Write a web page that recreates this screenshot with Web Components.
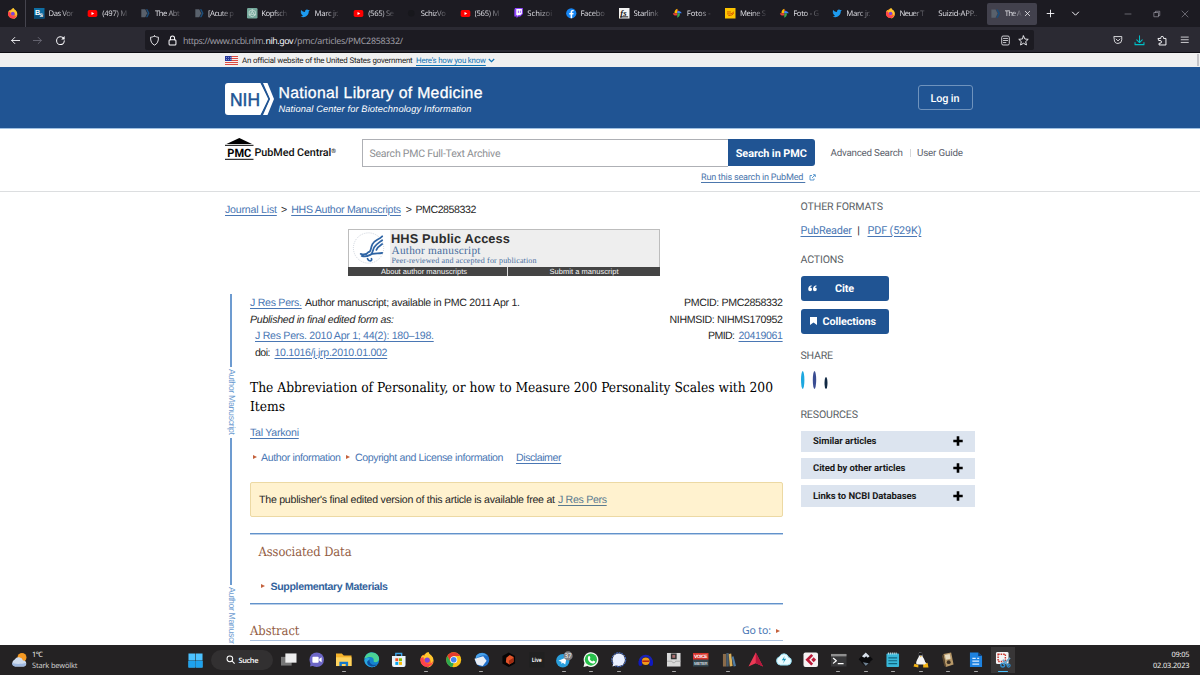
<!DOCTYPE html>
<html lang="de">
<head>
<meta charset="utf-8">
<title>The Abbreviation of Personality</title>
<style>
html,body{margin:0;height:100%;overflow:hidden;background:#fff;font-family:Roboto,"Liberation Sans",sans-serif;text-rendering:geometricPrecision}
</style>
</head>
<body>
<desk-top></desk-top>
<script>
/* Text run that spreads or tightens its letters to a given length; --dy nudges it down inside a centred row. */
class FitText extends HTMLElement{
  static all=[];
  constructor(){super();this.attachShadow({mode:'open'}).innerHTML=
    '<style>:host{display:inline-block;white-space:pre;flex:none;padding-top:var(--dy,0)}:host([u]) span{text-decoration:underline;text-decoration-thickness:1px;text-underline-offset:1.5px}</style><span><slot></slot></span>';}
  connectedCallback(){FitText.all.push(this);}
  fit(){
    const w=+this.getAttribute('w'),s=this.shadowRoot.querySelector('span'),r=s.getBoundingClientRect();
    const v=getComputedStyle(this).writingMode!=='horizontal-tb',n=this.textContent.length;
    if(!w||n<2)return;
    s.style.letterSpacing=((w-(v?r.height:r.width))/(n-1)).toFixed(3)+'px';
    this.style[v?'height':'width']=w+'px';
  }
}
customElements.define('fit-text',FitText);
const t=(s,w,st='',u='')=>`<fit-text w="${w}" style="${st}" ${u}>${s}</fit-text>`;

const fox='<circle cx="8" cy="8.6" r="6.6" fill="#ff7a1a"/><path d="M2 6C3 2 5 4 6 4C6 1 9 0 10 0c0 3 5 3 5 9 0 4-3 7-7 7 3-1 5-4 4-7-1-3-4-3-6-2z" fill="#ffc72e"/><path d="M1.500 7c0 5 3 8.600 7 8.300 3 0 6-2.600 6-6-1.500 3-4 3.500-6 2.600C5 11 4 8 5 5.500 3 5 2 6 1.500 7z" fill="#ff4150"/><circle cx="8.500" cy="8.300" r="2.700" fill="#8044d8"/>';
const yt='<rect x="1" y="3" width="14" height="10" rx="2.500" fill="#f00"/><path d="M6.500 5.700v4.600l4-2.300z" fill="#fff"/>';
const ncbi='<path d="M2 2h6l3 6-3 6H2z" fill="#59616c"/><path d="M9 2h2.500l3 6-3 6H9l3-6z" fill="#1c4e7b"/>';
const bird='<path d="M15 3.500l-1.600 1.600C13.500 11 9 14 5 14c-1.500 0-3-.5-4-1.100 1.500 0 3-.4 3.800-1.200-1.300-.2-2.300-1-2.600-2h1.200C2 9.200 1 8 1.200 6.600l1.200.3C1.200 6 .9 4.300 1.700 3c1.500 2 3.600 3 6 3.100C7.300 3.700 9 2.200 10.700 2.300c.9 0 1.500.4 2 .9z" fill="#1d9bf0"/>';
const photos='<path d="M8 8V1.500a3.700 3.700 0 010 6.500z" fill="#e94335"/><path d="M8 1.200V8H3.800C3.500 5 5 2 8 1.200z" fill="#fbbc04"/><path d="M14.800 8H8V5c3-1.500 6 0 6.800 3z" fill="#4285f4"/><path d="M8 14.800V8h4c.3 3-1 6-4 6.800z" fill="#34a853"/><path d="M1.200 8H8v3C5 12.500 2 11 1.200 8z" fill="#ea4335"/>';
const S=(d,c='#fbfbfe',w=1.300)=>`<path d="${d}" fill="none" stroke="${c}" stroke-width="${w}" stroke-linecap="round" stroke-linejoin="round"/>`;
const ICONS={
  none:'',fox,yt,ncbi,bird,photos,
  bs:'<rect width="16" height="16" fill="#0f6ea3"/><path d="M0 11h16v5H0z" fill="#0a4d78"/><text x="1.500" y="11" font-family="Liberation Sans" font-weight="700" font-size="11" fill="#fff">B</text><text x="8.500" y="14" font-family="Liberation Sans" font-weight="700" font-size="10" fill="#fff">s</text>',
  gpt:'<rect width="16" height="16" rx="2" fill="#75a99c"/><g fill="none" stroke="#dfece8" stroke-width="1"><circle cx="8" cy="8" r="2"/><path d="M8 2.500l4.700 2.700v5.500L8 13.500l-4.700-2.800V5.200z"/><path d="M8 2.500v4M12.700 10.700L9.500 9M3.300 10.700L6.500 9"/></g>',
  dark:'<circle cx="8" cy="8" r="5" fill="#17171c"/>',
  twitch:'<path d="M3 0h12v9l-4 4H8l-2.500 2.500V13H2V3z" fill="#9146ff"/><path d="M5 1.500h8.500v6.800L11 10.500H8.500L6.500 12v-1.500H5z" fill="#fff"/><path d="M8.200 4v3.500M11.200 4v3.500" stroke="#9146ff" stroke-width="1.300"/>',
  fb:'<circle cx="8" cy="8" r="7.800" fill="#1685f2"/><path d="M7 15.800V10H5V7.700h2V6c0-2 1.200-3.100 3-3.100l1.700.2v2h-1c-1 0-1.300.6-1.300 1.200v1.400h2.200L11.200 10H9.400v5.800z" fill="#fff"/>',
  fs:'<rect width="16" height="16" fill="#f4f4f4"/><text x="2" y="11.500" font-family="Liberation Serif" font-weight="700" font-style="italic" font-size="13" fill="#111">fs</text><path d="M2 13.500h12" stroke="#111" stroke-width="1.500"/>',
  ard:'<rect width="16" height="16" fill="#fcc400"/><path d="M3 6h6M3 9h4c2 0 6-1 6-3.500M5 11.500c4 0 8-1 8-4.500" stroke="#d35a00" stroke-width="1.500" fill="none"/>',
  back:S('M14 8H2.500M7 3.500L2.500 8 7 12.500'),
  fwd:S('M2 8h11.500M9 3.500L13.500 8 9 12.500','#6c6b77'),
  reload:S('M13.500 8.500A5.600 5.600 0 118 2.700c2 0 3.600.9 4.700 2.300','#fbfbfe',1.500)+'<path d="M14 1.500v5H9z" fill="#fbfbfe"/>',
  shield:S('M8 1.500c2 1.200 3.500 1.600 5.700 1.700C14 9 12 13 8 14.700 4 13 2 9 2.300 3.200 4.500 3.100 6 2.700 8 1.500z'),
  lock:'<rect x="3" y="7" width="10" height="7.500" rx="1.500" fill="none" stroke="#fbfbfe" stroke-width="1.500"/>'+S('M5 7V4.500a3 3 0 016 0V7','#fbfbfe',1.500),
  reader:'<rect x="2.500" y="1.500" width="11" height="13" rx="2" fill="none" stroke="#d6d6dc" stroke-width="1.400"/>'+S('M5 5h6M5 8h6M5 11h3.500','#d6d6dc'),
  star:S('M8 1.300l2 4.500 4.900.5-3.700 3.300 1.100 4.900L8 12l-4.300 2.500 1.100-4.900L1.100 6.300 6 5.800z'),
  pocket:S('M2 2.500h12v5a6 6 0 01-12 0zM5 6.500l3 3 3-3'),
  down:S('M8 1v9.500M4 7l4 4 4-4M1.500 11v3h13v-3','#00bfc8',1.500),
  puzzle:S('M2 5h3.500V4a2 2 0 014 0v1H13v9.500H3V12h1.500a2 2 0 000-4H3z','#fbfbfe',1.400),
  menu:S('M2 3.500h12M2 8h12M2 12.500h12'),
  plus:S('M8 2v12M2 8h12','#fbfbfe',1.600),
  chev:S('M2.500 5.500L8 11l5.500-5.500','#fbfbfe',1.700),
  x:S('M3 3l10 10M13 3L3 13','#fbfbfe',1.700),
  xw:S('M2 2l12 12M14 2L2 14','#8f8e98',1.300),
  min:S('M2 8h12','#8f8e98',1.300),
  restore:S('M2.500 5h8.500v8.500H2.500zM5 5V2.500h8.500V11H11','#9f9ea8',1.300),
  weather:'<circle cx="11" cy="5.500" r="4.500" fill="#f59a23"/><path d="M4 14.500a3.700 3.700 0 01-.3-7A4.500 4.500 0 0112 8.500a3 3 0 01.5 6z" fill="#cfdcee"/><path d="M4 14.500a3.700 3.700 0 01-3-4c2 2 10 1.500 13.800.5a3 3 0 01-2.300 3.500z" fill="#9fb9e0"/>',
  win:'<path d="M.5.500h7.200v7.200H.5zM8.300.500h7.200v7.200H8.300zM.5 8.300h7.200v7.200H.5zM8.300 8.300h7.200v7.200H8.300z" fill="#4cc2ff"/><path d="M.5 8.300h7.200v7.200H.5zM8.300 8.300h7.200v7.200H8.300z" fill="#1ea2ee"/>',
  search:'<circle cx="6.500" cy="6.500" r="4.800" fill="none" stroke="#fff" stroke-width="1.700"/><path d="M10 10l4.500 4.500" stroke="#fff" stroke-width="1.800"/>',
  tv:'<rect x="0" y="5" width="11" height="9" fill="#777"/><rect x="4.500" y="1.500" width="11.500" height="9.500" fill="#eee"/>',
  chat:'<circle cx="8" cy="8" r="7.500" fill="#6c66c6"/><path d="M1 15l1-5 4 4z" fill="#6c66c6"/><rect x="3.500" y="5" width="6.500" height="6" rx="1" fill="#fff"/><path d="M10.500 7.300L13 5.500v5l-2.500-1.800z" fill="#fff"/>',
  folder:'<path d="M0 1.500h6l2 2h8v11H0z" fill="#f6b32b"/><path d="M0 5.500h16v9H0z" fill="#ffd45e"/><path d="M3.500 10h9v4.500h-2.500v-2H6v2H3.500z" fill="#1677c9"/>',
  edge:'<circle cx="8" cy="8" r="7.700" fill="#1483cf"/><path d="M.5 7C1 3 4 .4 8 .4c4.500 0 7.600 3 7.600 6.600 0 2-1.600 3.500-4 3.500-1.600 0-2-1-1.600-2C10.500 6 7 3.500.5 7z" fill="#4ad295"/><path d="M6 7c-1 4 1.500 7 7.500 6.300A7.700 7.700 0 01.4 8.500C2 5.500 5 5.500 6 7z" fill="#2aa7df"/><path d="M6 7.500c-1 4 2 6.500 7.700 5.600C9 17 2 14 3.500 9.500z" fill="#0c4fa0"/>',
  store:'<path d="M1 4h14v9.500a2 2 0 01-2 2H3a2 2 0 01-2-2z" fill="#e9f3fa"/><path d="M5 4V1.500h6V4" fill="none" stroke="#3ba4e8" stroke-width="1.400"/><path d="M4.500 6.500h3v3h-3z" fill="#f25022"/><path d="M8.300 6.500h3v3h-3z" fill="#7fba00"/><path d="M4.500 10.300h3v3h-3z" fill="#00a4ef"/><path d="M8.300 10.300h3v3h-3z" fill="#ffb900"/>',
  chrome:'<circle cx="8" cy="8" r="7.700" fill="#fbc116"/><path d="M1.300 4.200A7.700 7.700 0 0114.700 4.200H8L4.700 9.900z" fill="#e33b2e"/><path d="M1.300 4.200L4.700 10 8 11.900l-1.500 3.700A7.700 7.700 0 011.300 4.200z" fill="#2da94f"/><circle cx="8" cy="8" r="3.700" fill="#fff"/><circle cx="8" cy="8" r="2.900" fill="#4285f4"/>',
  tb:'<circle cx="8.500" cy="8" r="7.300" fill="#1f6fc9"/><path d="M.5 7l9-2.500L13 9l-4 5.500L3 13z" fill="#e8eef6"/><path d="M2 4c3-4 9-4 12 0-4-1.500-8-.5-12 3z" fill="#4aa3ea"/>',
  hex:'<path d="M8 .5l6.500 3.700v7.600L8 15.500l-6.500-3.700V4.200z" fill="#050505"/><path d="M9 3l4 2.200-.2 5L8.500 13 5 10.500 5.500 6z" fill="#e2542a"/><path d="M8 9l5-3v4.200L8.500 13z" fill="#a32d12"/>',
  live:'<rect width="16" height="16" fill="#202020"/><text x="8" y="10.300" text-anchor="middle" font-family="Open Sans" font-weight="700" font-size="6" textLength="10.500" lengthAdjust="spacingAndGlyphs" fill="#f4f4f4">Live</text>',
  tg:'<circle cx="7" cy="9" r="6.900" fill="#2a9fdc"/><path d="M2.500 9l8.500-3.500L9.500 13 7 11l-1.300 1.300L5.500 10z" fill="#fff"/><circle cx="12.500" cy="4" r="4.700" fill="#807f82"/><text x="12.500" y="6.400" text-anchor="middle" font-family="Open Sans" font-size="6.500" fill="#fff">37</text>',
  wa:'<path d="M.5 15.500l1-4.200A7.600 7.600 0 114.600 14.500z" fill="#f2f7f2"/><circle cx="8.200" cy="7.800" r="6.300" fill="#28c04b"/><path d="M5.500 4.300l1.300-.1.900 2-.8 1c.6 1.200 1.500 2 2.700 2.500l1-1 2 1c0 2-2 2.500-3.500 2C6.500 10.700 4 7.500 5.500 4.300z" fill="#fff"/>',
  sig:'<circle cx="8" cy="8" r="7.200" fill="none" stroke="#4a7df0" stroke-width="1" stroke-dasharray="2 .8"/><circle cx="8" cy="8" r="6.400" fill="#eaf0ff"/><path d="M1.500 15l1.300-5 3.500 3.500z" fill="#eaf0ff"/>',
  aud:'<path d="M2 10a6 6 0 0112 0" fill="none" stroke="#1a22b8" stroke-width="2.500"/><rect x=".5" y="8" width="4" height="6.500" rx="2" fill="#1019c0"/><rect x="11.500" y="8" width="4" height="6.500" rx="2" fill="#1019c0"/><ellipse cx="8" cy="9.500" rx="4" ry="3.800" fill="#f09b1a"/><path d="M4.500 9.500h7" stroke="#b21d12" stroke-width="1.500"/>',
  box:'<rect x="1" y="1" width="14" height="14" fill="#d9d9d9"/><rect x="5" y="1.500" width="6" height="6" fill="#333"/><path d="M6.500 3h3v3h-3z" fill="#a96f6f"/><path d="M1 9.500h5l1 1.500h2l1-1.500h5" stroke="#aaa" fill="none"/>',
  voice:'<rect x="0" y="1" width="16" height="7" fill="#d8332b"/><rect y="8" width="16" height="7" fill="#334650"/><text x="8" y="6.500" text-anchor="middle" font-family="Liberation Sans" font-weight="700" font-size="5" textLength="14" fill="#fff">VOICE</text><text x="8" y="13.500" text-anchor="middle" font-family="Liberation Sans" font-weight="700" font-size="4.500" textLength="14" fill="#c9d2d6">METER</text>',
  books:'<path d="M2 2h3.500v13H2z" fill="#8a6b4a"/><path d="M5.500 1H8v14H5.500z" fill="#4a5f70"/><path d="M8 2l2.500-.5 1.500 13L9 15z" fill="#d9b05a"/><path d="M11 5l2-.5 2.500 10-2.500.5z" fill="#4f7ba3"/>',
  tri:'<path d="M8 .5L15.500 15 8 11.500.5 15z" fill="#ec3a55"/><path d="M8 .5L15.500 15 8 11.500z" fill="#b5163c"/>',
  cloud:'<path d="M4.500 13.500A4.500 4.500 0 013.600 4.800a5 5 0 019.300.5A4.200 4.200 0 0112 13.500z" fill="#e9fbff" stroke="#8cd9ee"/><path d="M9 4L6 8.500h2.500L7 12l3.500-5H8z" fill="#1593b8"/>',
  cub:'<rect x=".5" y=".5" width="15" height="15" rx="2" fill="#f5f2f3"/><path d="M9.500 3L4.500 8l5 5" fill="none" stroke="#bb1a38" stroke-width="2.800"/><path d="M11 5.500L13.500 8 11 10.500 8.500 8z" fill="#bb1a38"/>',
  term:'<rect x="0" y="2" width="16" height="13" fill="#38383a"/><path d="M0 2h16v2.500H0z" fill="#8f8f8f"/>'+S('M2.500 6.500l3 2.500-3 2.500M7.500 12h5','#fff',1.300),
  ink:'<path d="M8 .5l7 6.500c1 1.500-2.500 2-2.500 3.500L8 15l-4.500-4C3.500 9 0 8.500 1 7z" fill="#0b0b0d"/><path d="M8 .5l4 4-2 1.500-1.500-1.500L6.500 6 4 4.500z" fill="#d8e0ea"/><path d="M5 10.500l6 1-3 3z" fill="#6e8091"/>',
  notes:'<rect x="1.500" y="1.500" width="13" height="14" rx="1" fill="#38b7d8"/><path d="M3 1.500h10" stroke="#cfe9f1" stroke-width="2" stroke-dasharray="1 1"/><path d="M3.500 6h9M3.500 9h9M3.500 12h9" stroke="#11667f" stroke-width="1.200"/>',
  tux:'<path d="M6 1c3-1.500 4 1 4 4 2 3 3 5 2.500 8H4C2 11 5 7 6 5z" fill="#f3f3f3"/><path d="M6 1c2-1.500 4 0 4 2.500H5.500z" fill="#16161a"/><path d="M1.500 12l4 1.500V16l-5-1zM15 11l-4.500 1.500V16H16z" fill="#f3b313"/><path d="M10.500 8.500l3.500 3-3 2z" fill="#efefef"/><path d="M7 4h2l-1 1.500z" fill="#f3b313"/>',
  mix:'<path d="M3.500 2l8-1.500L14 13l-8 2.500z" fill="#b69868"/><path d="M5 3l5-1 1 5-5 1z" fill="#e7dcc1"/><circle cx="9" cy="10.500" r="2" fill="#3b2f22"/><path d="M3.500 2L6 15.500l-1.500-1L2 4z" fill="#5d4a30"/>',
  doc:'<path d="M2 .5h8.500L14.500 4v11.500H2z" fill="#1d82e0"/><path d="M10.500.5L14.500 4h-4z" fill="#0e3f79"/><path d="M4.500 6.500h3.500M4.500 9.500h7M4.500 12.500h7M9.500 6.500h2" stroke="#d9ecff" stroke-width="1.300"/>',
  snip:'<rect x="1" y="0" width="13" height="12.500" rx="1.500" fill="#f2f4f6"/><rect x="3.200" y="2.300" width="7.500" height="7.500" fill="none" stroke="#c8352c" stroke-width="1.500" stroke-dasharray="1.600 1"/><path d="M15.500 6l-7 7M8 8l6 6" stroke="#6aa3c6" stroke-width="1.800"/><circle cx="8" cy="13.500" r="2" fill="none" stroke="#2f8fcf" stroke-width="1.400"/><circle cx="14" cy="14" r="1.600" fill="none" stroke="#2f8fcf" stroke-width="1.200"/>'
};
class UiIcon extends HTMLElement{
  constructor(){super();this.attachShadow({mode:'open'});}
  connectedCallback(){
    const s=this.getAttribute('size')||11;
    this.shadowRoot.innerHTML=`<style>:host{display:block;flex:none;width:${s}px;height:${s}px}svg{display:block;overflow:visible}</style><svg width="${s}" height="${s}" viewBox="0 0 16 16">${ICONS[this.getAttribute('name')]}</svg>`;
  }
}
customElements.define('ui-icon',UiIcon);
const ic=(n,s=11,st='')=>`<ui-icon name="${n}" size="${s}" style="${st}"></ui-icon>`;
const def=(name,html)=>customElements.define(name,class extends HTMLElement{
  constructor(){super();this.attachShadow({mode:'open'}).innerHTML=html;}
});

/* ---------- browser chrome ---------- */
const tabs=[['bs','Das Vor',25],['yt','(497) M',25],['ncbi','The Abt',25],['ncbi','[Acute p',26],['gpt','Kopfsch',26],['bird','Marc jr.',24],['yt','(565) Se',26],['dark','SchizVo',25],['yt','(565) M',25],['twitch','Schizoi',25],['fb','Facebo',24.500],['fs','Starlink',25],['photos','Fotos -',24],['ard','Meine S',26],['photos','Foto - G',26],['bird','Marc jr.',24],['fox','Neuer T',25]];
def('browser-tabs',`<style>
:host{display:flex;align-items:center;height:27px;background:#1c1b22;color:#dcdce2;font:7.700px "Noto Sans","Open Sans",sans-serif;--dy:1px}
.pin{width:26px;height:27px;box-sizing:border-box;border-right:1px solid #45444e;display:flex;align-items:center;padding-left:7px}
.tab{width:53.200px;box-sizing:border-box;padding-left:7.500px;display:flex;align-items:center;gap:4px;flex:none;height:27px}
.l{width:28px;white-space:nowrap;flex:none;-webkit-mask:linear-gradient(90deg,#000 40%,transparent 100%);mask:linear-gradient(90deg,#000 40%,transparent 100%)}
.act{width:50px;height:22px;border-radius:2px;background:#42414d;display:flex;align-items:center;box-sizing:border-box;padding-left:3px;flex:none}
.sui{width:42px;-webkit-mask:linear-gradient(90deg,#000 65%,transparent);mask:linear-gradient(90deg,#000 65%,transparent)}
</style><div class="pin">${ic('fox',11)}</div><div style="width:.5px"></div>`
+tabs.map(([i,s,w])=>`<div class="tab">${ic(i,i==='yt'?11:10.500)}<div class="l">${t(s,w)}</div></div>`).join('')
+`<div class="l sui" style="margin-left:7.500px;margin-right:6.500px">${t('Suizid-APP..',39)}</div>
<div class="act">${ic('ncbi',11)}<div class="l" style="width:18px;margin-left:4px">${t('The A',17)}</div>${ic('x',7,'margin-left:1px')}</div>
${ic('plus',9,'margin-left:9.500px')}${ic('chev',9,'margin-left:16px')}${ic('min',8,'margin-left:44px')}${ic('restore',8,'margin-left:20.500px')}${ic('xw',8,'margin-left:20.500px')}`);
def('browser-nav',`<style>
:host{display:flex;align-items:center;height:26px;box-sizing:border-box;background:#2b2a33;border-bottom:1px solid #0e0d13;padding:1px 10px 0 9.500px;font:8.900px "Noto Sans",sans-serif;color:#9c9ba4;--dy:1px}
.bar{margin-left:79px;width:889px;height:20px;background:#1c1b22;border-radius:2px;display:flex;align-items:center;box-sizing:border-box;padding-left:4.500px;flex:none}
</style>${ic('back')}${ic('fwd',11,'margin-left:11.500px')}${ic('reload',11,'margin-left:11.500px')}
<div class="bar">${ic('shield')}${ic('lock',11,'margin-left:6.500px')}${t('https://www.ncbi.nlm.',82.500,'margin-left:5.500px')}${t('nih.gov',28,'color:#f4f4f8;margin-right:.5px')}${t('/pmc/articles/PMC2858332/',109)}
${ic('reader',11,'margin-left:597px')}${ic('star',11,'margin-left:6.500px')}</div>
${ic('pocket',10,'margin-left:79px')}${ic('down',11,'margin-left:11.500px')}${ic('puzzle',11,'margin-left:12px')}${ic('menu',9.500,'margin-left:12px')}`);

/* ---------- site header ---------- */
def('gov-banner',`<style>:host{display:flex;align-items:center;height:14px;background:#f0f0f0;padding-left:225px;font:7.900px Roboto,sans-serif;color:#1b1b1b}
.sb{width:2px;height:12px;background:#c4c4c8;margin-left:auto;margin-right:1px}svg{display:block}</style>
<svg width="13" height="9" viewBox="0 0 13 9"><rect width="13" height="9" fill="#f6f0f0"/><path d="M0 .5h13M0 2.500h13M0 4.500h13M0 6.500h13M0 8.500h13" stroke="#dd4b40"/><rect width="6.500" height="5" fill="#27389a"/><path d="M1 1.500h5M1 3.500h5" stroke="#aab4e6" stroke-width=".7" stroke-dasharray="1 1"/></svg>
${t('An official website of the United States government',170,'margin-left:4px')}${t("Here's how you know",70,'margin-left:4px;color:#0e74b5','u')}
<svg width="7" height="5" viewBox="0 0 7 5" style="margin-left:1.500px"><path d="M.8 1l2.700 2.700L6.200 1" fill="none" stroke="#0e74b5" stroke-width="1.200"/></svg><div class="sb"></div>`);
def('nih-header',`<style>:host{display:flex;align-items:center;height:62px;background:#205493;border-bottom:1px solid #9fc0e2;box-sizing:border-box;padding-left:225px;color:#fff;font-family:"Liberation Sans",sans-serif}
svg{display:block;margin-top:3px}.n{margin-left:4.500px;width:640px;padding-top:4px}.a,.b{display:flex;align-items:center}.a{height:18px;font-size:15.800px;-webkit-text-stroke:.3px #fff}.b{height:11px;font:italic 9.300px "Liberation Sans"}
.log{width:55px;height:25px;border:1px solid #6f93bd;border-radius:3px;box-sizing:border-box;display:flex;align-items:center;justify-content:center;font:500 10.800px Roboto;--dy:1px}</style>
<svg width="49" height="32" viewBox="0 0 49 32"><path d="M3 0h32.500l8.500 16-8.500 16H3a3 3 0 01-3-3V3a3 3 0 013-3z" fill="#fff"/><path d="M38 0h4.500L49 16l-6.500 16H38l7-16z" fill="#fff"/><path d="M36.300-.5L44 16l-7.700 16.500" fill="none" stroke="#205493" stroke-width="1.500"/><text x="5" y="22.500" font-family="Liberation Sans" font-size="18.500" textLength="30" lengthAdjust="spacingAndGlyphs" fill="#205493" stroke="#205493" stroke-width=".5">NIH</text></svg>
<div class="n"><div class="a">${t('National Library of Medicine',204)}</div><div class="b">${t('National Center for Biotechnology Information',193)}</div></div>
<div class="log" style="margin-left:-1px">${t('Log in',29)}</div>`);
def('search-area',`<style>:host{display:block;height:63px;box-sizing:border-box;border-bottom:1px solid #dcdee0;padding:9px 0 0 225px;font-family:Roboto,sans-serif;color:#5b616b}
.r{display:flex;align-items:center;height:29px}.in{width:366px;height:28px;box-sizing:border-box;border:1.500px solid #aeb0b5;border-right:0;display:flex;align-items:center;padding-left:7px;margin-left:25.500px;font-size:10.500px;color:#8d8f93;--dy:1.500px}
.go{width:87.500px;height:27px;background:#205493;border-radius:0 3px 3px 0;color:#fff;font-weight:700;font-size:10.900px;display:flex;align-items:center;justify-content:center;--dy:1px}
.d{width:1px;height:8px;background:#d6d7d9;margin:0 6.500px}svg{display:block}.logo{display:block;width:28.500px;height:22px;margin-top:-7px}</style>
<div class="r"><svg class="logo" viewBox="0 0 28.500 22"><path d="M14.300 0L27 6H1.500z"/><path d="M0 7.300h28.500M0 21.300h28.500" stroke="#000" stroke-width="1"/><text x="2.300" y="18.600" font-family="Roboto" font-weight="700" font-size="11.500" textLength="24" lengthAdjust="spacingAndGlyphs">PMC</text></svg>
${t('PubMed Central<sup style="font-size:6px;vertical-align:3.500px;line-height:0">®</sup>',81.500,'margin-left:1px;font-size:10.800px;font-weight:500;color:#111')}
<div class="in">${t('Search PMC Full-Text Archive',131)}</div><div class="go">${t('Search in PMC',71)}</div>
${t('Advanced Search',72.500,'margin-left:15.500px;font-size:9.800px;--dy:1.500px')}<div class="d"></div>${t('User Guide',46,'font-size:9.800px;--dy:1.500px')}</div>
<div class="r" style="height:20px;padding-left:476px;font-size:9.100px;color:#4c77ad;--dy:1.500px">${t('Run this search in PubMed ',104.500,'','u')}<svg width="7" height="7" viewBox="0 0 7 7" style="margin-left:3.500px"><path d="M3 1.500H1v4.500h4V4.500M3 4L6 1M4 .7h2.300V3" fill="none" stroke="#4c8fca" stroke-width=".9"/></svg></div>`);

/* ---------- article ---------- */
def('red-arrow',`<style>:host{display:block;flex:none;width:4px;height:4px}svg{display:block}</style><svg width="4" height="4" viewBox="0 0 4 4"><path d="M0 0l4 2-4 2z" fill="#c4623d"/></svg>`);
def('hhs-banner',`<style>:host{display:flex;flex-direction:column;width:312px;height:46px;box-sizing:border-box;border:1px solid #bdbdbd;border-bottom:0;background:#eee}
.top{height:36.500px;display:flex}.l{width:41px;background:#fff}.x{padding-left:1px}.x div{display:flex;align-items:center}
.bot{height:9px;background:#444;color:#f4f4f4;font:7.500px "Liberation Sans";display:flex;margin:0 -1px}.bot div{display:flex;align-items:center;box-sizing:border-box;height:9px}</style>
<div class="top"><div class="l"><svg width="41" height="36" viewBox="0 0 42 36"><circle cx="20" cy="18" r="15.500" fill="none" stroke="#bcc4cf" stroke-dasharray="1 1.200" stroke-width=".8"/><g fill="none" stroke="#2e64a4" stroke-width="1.800" stroke-linecap="round"><path d="M34 6c-4 4-8 4-10 8s-1 6-3 8M34 10c-4 3-6 4-8 7s-1 6-4 8M34 14c-3 2-5 3-6 6M20 22c-2 3-5 3-8 2M13 26c5 2 8-1 11-2s7 0 10-1M19 29c1 3 5 3 4 0"/></g></svg></div>
<div class="x"><div style="height:16px;font:700 12.800px 'Liberation Sans';color:#2d2d2d">${t('HHS Public Access',119)}</div><div style="height:10px;font:11.300px 'Liberation Serif';color:#4a6f9f">${t('Author manuscript',89,'margin-left:.5px')}</div><div style="height:9px;font:8px 'Liberation Serif';color:#4a6f9f">${t('Peer-reviewed and accepted for publication',145,'margin-left:.5px')}</div></div></div>
<div class="bot"><div style="width:160px;border-right:1px solid #ddd;padding-left:33px">${t('About author manuscripts',86)}</div><div style="padding-left:41.500px">${t('Submit a manuscript',69)}</div></div>`);
def('side-rail',`<style>:host{display:flex;flex-direction:column;align-items:center;width:11px;height:351px;font:8.800px "Liberation Sans",sans-serif;color:#6d9bd0}
i{display:block;width:2px;background:#6d9bd0;flex:none}fit-text{writing-mode:vertical-rl;margin:2px 0 2px 2px}</style>
<i style="height:73px"></i>${t('Author Manuscript',66)}<i style="height:147px;margin-top:1px"></i>${t('Author Manuscr',57)}`);
const B='#4a77b4';
def('article-body',`<style>:host{display:block;width:558px;font:10.600px "Liberation Sans",sans-serif;color:#262626}
.r{display:flex;align-items:center}.n{--dy:1px}.cols{display:flex;margin-top:19px}.m{width:533px;margin-left:14px}
.s{font-family:"DejaVu Serif Condensed","DejaVu Serif",serif}.box{margin-top:16px;height:35px;box-sizing:border-box;border:1px solid #ecd9a4;border-radius:2px;background:#fff2cf;padding-left:8px}
.sec{margin-top:16px;border:solid #6292cb;border-width:1px 0;box-shadow:0 1px #b9cfe9,inset 0 1px #b9cfe9;height:71px;box-sizing:border-box;padding-top:9px}</style>
<div class="r n" style="height:18px;padding-top:8px">${t('Journal List',52,'color:'+B,'u')}${t('&gt;',6,'margin-left:4px')}${t('HHS Author Manuscripts',110,'margin-left:4px;color:'+B,'u')}${t('&gt;',6,'margin-left:4.500px')}${t('PMC2858332',61,'margin-left:3.500px')}</div>
<hhs-banner style="margin:11px 0 0 123px"></hhs-banner>
<div class="cols"><side-rail></side-rail><div class="m">
<div class="r" style="height:17px">${t('J Res Pers.',52,'color:'+B,'u')}${t('Author manuscript; available in PMC 2011 Apr 1.',215,'margin-left:3px')}${t('PMCID: PMC2858332',99,'margin-left:auto')}</div>
<div class="r" style="height:17px">${t('Published in final edited form as:',144,'font-style:italic')}${t('NIHMSID: NIHMS170952',113.500,'margin-left:auto')}</div>
<div class="r" style="height:16px">${t('J Res Pers. 2010 Apr 1; 44(2): 180–198.',179,'margin-left:5px;color:'+B,'u')}${t('PMID:',27,'margin-left:auto')}${t('20419061',44.500,'margin-left:3.500px;color:'+B,'u')}</div>
<div class="r" style="height:17px">${t('doi:',15.500,'margin-left:5px')}${t('10.1016/j.jrp.2010.01.002',113,'margin-left:4px;color:'+B,'u')}</div>
<div class="s" style="margin-top:17px;font-size:13.700px;color:#000;--dy:1px"><div class="r" style="height:19px">${t('The Abbreviation of Personality, or how to Measure 200 Personality Scales with 200',523)}</div><div class="r" style="height:19px">${t('Items',35)}</div></div>
<div class="r n" style="height:18px;margin-top:7px;color:${B}">${t('Tal Yarkoni',49,'','u')}</div>
<div class="r n" style="height:18px;margin-top:7px;color:${B}"><red-arrow style="margin-left:2.500px"></red-arrow>${t('Author information',80,'margin-left:4.500px')}<red-arrow style="margin-left:5px"></red-arrow>${t('Copyright and License information',148.500,'margin-left:5px')}${t('Disclaimer',45.500,'margin-left:12.500px','u')}</div>
<div class="r box">${t("The publisher's final edited version of this article is available free at",296)}${t('J Res Pers',49,'margin-left:3px;color:#5a7a8f','u')}</div>
<div class="sec"><div class="r s n" style="height:18px;padding-left:8.500px;font-size:12.800px;color:#935d44">${t('Associated Data',93)}</div>
<div class="r n" style="height:18px;margin-top:16px;padding-left:11px;font-weight:700;color:#33639c"><red-arrow></red-arrow>${t('Supplementary Materials',117.500,'margin-left:5.500px')}</div></div>
<div class="r n" style="height:37px;box-sizing:border-box;padding-top:18px;border-bottom:1px solid #a9c0de"><span class="s" style="font-size:12.800px;color:#935d44">${t('Abstract',49.500)}</span>${t('Go to:',29,"margin-left:auto;--dy:0px;font:10.500px 'Noto Sans';color:"+B)}<red-arrow style="margin:0 3px 0 5px"></red-arrow></div>
</div></div>`);

/* ---------- right column ---------- */
const acc=(s,w,m)=>`<div class="acc" style="margin-top:${m}px">${t(s,w)}<svg width="10" height="10" viewBox="0 0 10 10"><path d="M5 .3v9.400M.3 5h9.400" stroke="#000" stroke-width="2.600"/></svg></div>`;
def('side-column',`<style>:host{display:block;width:174px;margin-left:17.500px;font:10.600px Roboto,sans-serif;color:#5b5f66}
.h{height:16px;display:flex;align-items:center}.btn{width:88px;height:24.500px;border-radius:3px;background:#205493;color:#fff;display:flex;align-items:center;font-weight:700;font-size:10.800px}
.acc{height:21.500px;background:#dce4ef;color:#1b1b1b;font-weight:700;font-size:9.500px;display:flex;align-items:center;justify-content:space-between;padding:0 12px 0 12.500px;width:150px;--dy:.8px}svg{display:block}
.sh{display:flex;align-items:flex-end;height:18px;margin-top:7.500px}.sh svg{flex:none}</style>
<div class="h" style="padding-top:6.500px">${t('OTHER FORMATS',82.500)}</div>
<div class="h" style="margin-top:8px;font-size:10.900px;color:${B}">${t('PubReader',51.500,'','u')}<span style="color:#222;width:16px;text-align:center;margin-left:-1.500px">|</span>${t('PDF (529K)',54,'margin-left:1px','u')}</div>
<div class="h" style="margin-top:13px">${t('ACTIONS',43)}</div>
<div class="btn" style="margin-top:8.500px"><svg width="9" height="7" viewBox="0 0 9 7" style="margin-left:7.500px"><path d="M3.500.3C1.500.6.200 2 .200 4.300a1.900 1.900 0 103.800 0c0-1-.8-1.800-1.900-1.800.2-.6.8-1 1.600-1.200zM8.300.3C6.300.6 5 2 5 4.300a1.900 1.900 0 103.800 0c0-1-.8-1.800-1.900-1.800.2-.6.8-1 1.600-1.200z" fill="#fff"/></svg>${t('Cite',19,'margin-left:18px')}</div>
<div class="btn" style="margin-top:8.500px"><svg width="7" height="8" viewBox="0 0 7 8" style="margin-left:9.500px"><path d="M0 0h7v8L3.500 5.500 0 8z" fill="#fff"/></svg>${t('Collections',53.500,'margin-left:5.500px')}</div>
<div class="h" style="margin-top:14px">${t('SHARE',32.500)}</div>
<div class="sh"><svg width="27" height="18" viewBox="0 0 27 18"><ellipse cx="1.700" cy="9" rx="1.700" ry="9" fill="#1da8e0"/><ellipse cx="13.500" cy="9" rx="1.700" ry="9" fill="#3a4d92"/><ellipse cx="25" cy="12" rx="1.500" ry="6" fill="#122a44"/></svg></div>
<div class="h" style="margin-top:17.500px">${t('RESOURCES',57.500)}</div>
${acc('Similar articles',63.500,8)}${acc('Cited by other articles',92.500,5.500)}${acc('Links to NCBI Databases',103.500,6)}`);

/* ---------- taskbar ---------- */
const apps='tv chat folder. edge store fox. chrome tb. hex live tg. wa. sig. aud box. voice books. tri cloud cub term. ink. notes. tux. mix. doc. snip!'.split(' ');
def('task-bar',`<style>:host{display:flex;align-items:center;height:30px;background:#242223;color:#f2f2f2;font:7.400px "Noto Sans","Open Sans",sans-serif;--dy:1px}
.w{width:157.500px;margin-left:4px}.w div,.c div{height:10.500px;display:flex;align-items:center}.pill{width:62px;height:20px;border-radius:10px;background:#323031;display:flex;align-items:center;box-sizing:border-box;padding-left:15px;margin:0 2.500px 0 8px;font-weight:600}
.a{width:27.460px;height:30px;display:flex;flex-direction:column;align-items:center;box-sizing:border-box;padding-top:7px}.a i{width:4px;height:1.500px;border-radius:1px;background:#a8a8a8;margin-top:3px}
.on{background:linear-gradient(#383637,#383637) center/24px 26px no-repeat}.on i{width:10px;background:#4cc2ff}.c{margin-left:auto;margin-right:10.500px;display:flex;flex-direction:column;align-items:flex-end}</style>
${ic('weather',16,'margin-left:11px')}<div class="w" style="margin-left:5px">
<div>${t('1°C',11)}</div><div style="color:#cfcfcf">${t('Stark bewölkt',45.500)}</div></div>
${ic('win',15,'margin-left:-2px')}<div class="pill" style="margin-left:8.500px">${ic('search',9.500)}${t('Suche',20,'margin-left:3px')}</div>`
+apps.map(a=>`<div class="a ${a.endsWith('!')?'on':''}">${ic(a.replace(/[.!]/,''),15.500)}${/[.!]/.test(a)?'<i></i>':''}</div>`).join('')
+`<div class="c"><div>${t('09:05',18)}</div><div>${t('02.03.2023',36.500)}</div></div>`);
def('desk-top',`<style>:host{display:flex;flex-direction:column;width:1200px;height:675px;overflow:hidden}:host>*{flex:none}main{display:flex;height:453px;padding-left:225px;overflow:hidden;background:#fff;box-sizing:border-box}</style>
<browser-tabs></browser-tabs><browser-nav></browser-nav><gov-banner></gov-banner><nih-header></nih-header><search-area></search-area>
<main><article-body></article-body><side-column></side-column></main><task-bar></task-bar>`);
FitText.all.forEach(f=>f.fit());
</script>
</body>
</html>
